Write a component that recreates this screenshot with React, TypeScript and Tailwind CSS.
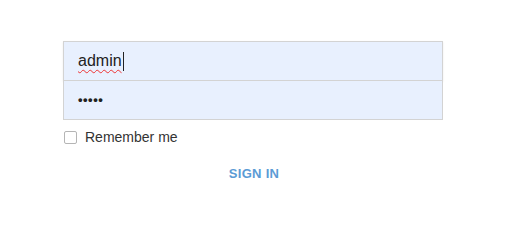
export default function App() {
  return (
    <div className="w-[519px] h-[200px] bg-white font-['Liberation_Sans',Arial,sans-serif]">
      <div className="pt-[41px] pl-[63px] w-[443px]">
        <div className="flex flex-col">
          <div className="h-[40px] bg-[#e8f0fe] border border-[#d3d3d3] shadow-[0_1px_2px_rgba(0,0,0,0.08)] flex items-center pl-[14px]">
            <span className="text-[16px] text-[#222] underline decoration-wavy decoration-[#e33] decoration-1 underline-offset-[3px]">
              admin
            </span>
            <span className="w-px h-[19px] bg-[#222] ml-px" />
          </div>
          <div className="h-[39px] bg-[#e8f0fe] border border-t-0 border-[#d3d3d3] flex items-center pl-[14px]">
            <span className="text-[13px] tracking-[0.5px] text-[#222] font-bold">•••••</span>
          </div>
        </div>
        <label className="flex items-center gap-[8px] mt-[7px] pl-[1px]">
          <span className="w-[13px] h-[13px] border border-[#b5b5b5] bg-white rounded-[2px]" />
          <span className="text-[14px] text-[#333]">Remember me</span>
        </label>
        <div className="flex justify-center mt-[16px] pl-[2px]">
          <span className="text-[13px] font-bold text-[#5b9bd5] tracking-[0.3px]">SIGN IN</span>
        </div>
      </div>
    </div>
  );
}
